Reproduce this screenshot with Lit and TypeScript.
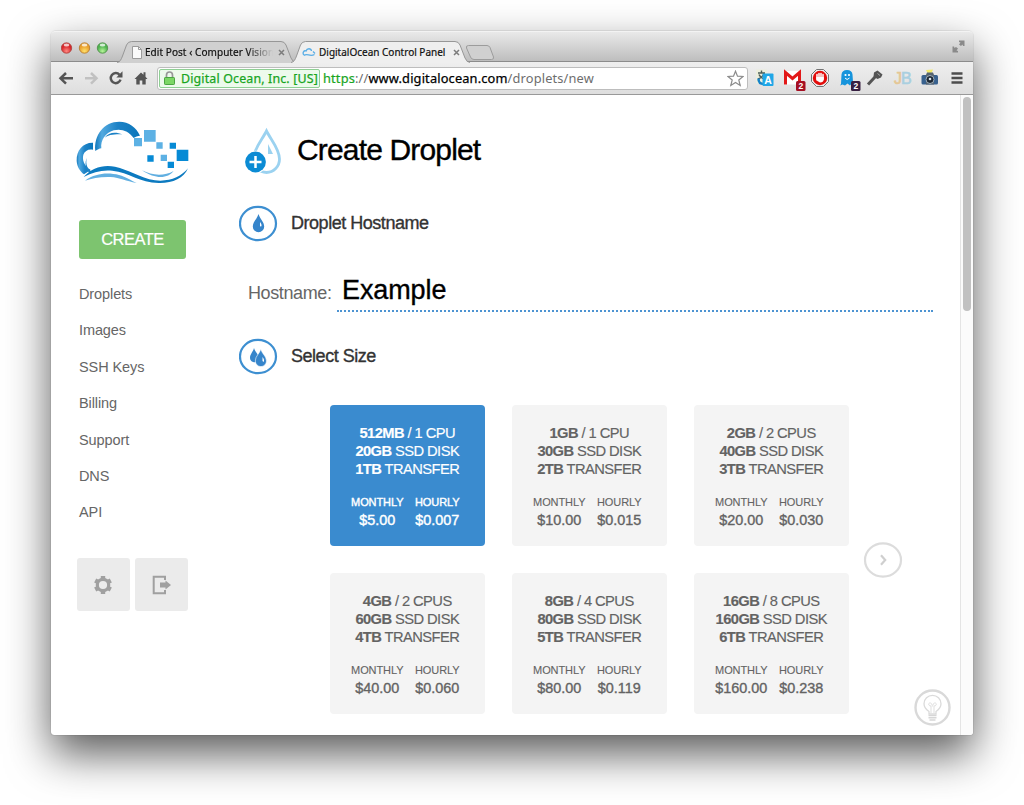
import { LitElement, html, css, svg } from "lit";
import { customElement } from "lit/decorators.js";
import { classMap } from "lit/directives/class-map.js";

interface Plan {
  memory: string;
  cpu: string;
  disk: string;
  transfer: string;
  monthly: string;
  hourly: string;
  active?: boolean;
}

const PLANS: Plan[] = [
  { memory: "512MB", cpu: "1 CPU", disk: "20GB", transfer: "1TB", monthly: "$5.00", hourly: "$0.007", active: true },
  { memory: "1GB", cpu: "1 CPU", disk: "30GB", transfer: "2TB", monthly: "$10.00", hourly: "$0.015" },
  { memory: "2GB", cpu: "2 CPUS", disk: "40GB", transfer: "3TB", monthly: "$20.00", hourly: "$0.030" },
  { memory: "4GB", cpu: "2 CPUS", disk: "60GB", transfer: "4TB", monthly: "$40.00", hourly: "$0.060" },
  { memory: "8GB", cpu: "4 CPUS", disk: "80GB", transfer: "5TB", monthly: "$80.00", hourly: "$0.119" },
  { memory: "16GB", cpu: "8 CPUS", disk: "160GB", transfer: "6TB", monthly: "$160.00", hourly: "$0.238" },
];

const NAV = ["Droplets", "Images", "SSH Keys", "Billing", "Support", "DNS", "API"];

const tabShape = (w: number, fill: string) => svg`
  <path d="M0 22 C3 21 4 19 5.500 15 L9.500 4 Q11 .5 14.500 .5 H${w - 15} Q${w - 11.500} .5 ${w - 10} 4 L${w - 5} 17 Q${w - 3} 22 ${w} 22 Z" fill=${fill}></path>
  <path d="M0 21.500 C3 21 4 19 5.500 15 L9.500 4 Q11 .5 14.500 .5 H${w - 15} Q${w - 11.500} .5 ${w - 10} 4 L${w - 5} 17 Q${w - 3} 21.500 ${w} 21.500" fill="none" stroke="#979797"></path>`;

@customElement("browser-chrome")
class BrowserChrome extends LitElement {
  static styles = css`
    :host { display: block; font-family: "Noto Sans", sans-serif; color: #111; }
    .strip { display: flex; height: 31px; padding-left: 10px; box-sizing: border-box; border-bottom: 1px solid #8c8c8c;
      border-top: 1px solid #f3f3f3; background: linear-gradient(#e9e9e9, #bebebe); border-radius: 4px 4px 0 0; }
    .lights { display: block; width: 48px; height: 14px; margin-top: 9px; }
    .tab { position: relative; height: 22px; margin-top: 9px; display: flex; align-items: center; font-size: 10px; white-space: nowrap; }
    .shape { position: absolute; left: 0; top: 0; height: 22px; }
    .first { width: 179px; margin-left: 8px; }
    .second { width: 179px; margin-left: -5px; z-index: 1; }
    .first .shape, .second .shape { width: 179px; }
    .favicon { position: relative; width: 12px; height: 13px; margin-left: 14px; flex: none; }
    .second .favicon { width: 14px; margin-left: 11px; }
    .label { position: relative; margin-left: 3px; width: 131px; flex: none; line-height: 16px; -webkit-text-stroke: .2px currentColor; }
    .first .label { margin-left: 2px; width: 138px; -webkit-mask-image: linear-gradient(90deg, #000 102px, transparent 128px); letter-spacing: .06px; }
    .close { position: relative; width: 7px; height: 7px; margin-left: -5px; flex: none; }
    .second .close { margin-left: 3px; }
    .plus { width: 30px; height: 15px; margin: 13px 0 0 -5px; }
    .full { width: 13px; height: 13px; margin: 8px 8px 0 auto; }
    .bar { display: flex; align-items: center; height: 33px; box-sizing: border-box; padding: 0 8px 0 7px;
      background: linear-gradient(#efefef, #dedede); border-bottom: 1px solid #999; }
    .nav { width: 91px; height: 16px; flex: none; }
    .omni { display: flex; align-items: center; width: 591px; height: 23px; margin-left: 8px; box-sizing: border-box; flex: none;
      border: 1px solid #bdbdbd; border-radius: 3px; background: #fff; font-size: 12.400px; white-space: nowrap; }
    .cert { display: flex; align-items: center; width: 161px; height: 19px; box-sizing: border-box; margin-left: 1px; padding-left: 4px;
      border: 1px solid #8fcf94; border-radius: 2px; background: #edfaec; color: #18a51e; letter-spacing: .16px; -webkit-text-stroke: .25px currentColor; }
    .lock { width: 11px; height: 14px; margin-right: 6px; flex: none; }
    .url { margin-left: 3px; font-size: 12.800px; letter-spacing: .16px; color: #6d6d6d; }
    .scheme { color: #18a51e; -webkit-text-stroke: .2px currentColor; }
    .host { color: #000; -webkit-text-stroke: .25px currentColor; }
    .star { width: 17px; height: 17px; margin: 0 3px 0 auto; }
    .ext { width: 212px; height: 28px; margin-left: 8px; flex: none; }
    .badge { font: bold 8.500px "Liberation Sans", sans-serif; fill: #fff; }
    .glyph { font: bold 10.500px "Liberation Sans", sans-serif; fill: #fff; }
    .jb { font: 16px "Liberation Sans", sans-serif; stroke-width: .6px; }
  `;

  render() {
    return html`
      <div class="strip">
        <svg class="lights" viewBox="0 0 48 14">
          <defs>
            <radialGradient id="r" cx=".5" cy=".8"><stop offset="0" stop-color="#ff8a83"/><stop offset="1" stop-color="#d8262a"/></radialGradient>
            <radialGradient id="y" cx=".5" cy=".8"><stop offset="0" stop-color="#ffe26c"/><stop offset="1" stop-color="#eaa02c"/></radialGradient>
            <radialGradient id="g" cx=".5" cy=".8"><stop offset="0" stop-color="#b9f59a"/><stop offset="1" stop-color="#4fb350"/></radialGradient>
          </defs>
          <circle cx="5.500" cy="7" r="5.200" fill="url(#r)" stroke="#a8423e" stroke-width=".8"/>
          <circle cx="23.500" cy="7" r="5.200" fill="url(#y)" stroke="#b0762d" stroke-width=".8"/>
          <circle cx="41.500" cy="7" r="5.200" fill="url(#g)" stroke="#4c8a45" stroke-width=".8"/>
          <ellipse cx="5.500" cy="4" rx="2.800" ry="1.500" fill="#fff" opacity=".75"/>
          <ellipse cx="23.500" cy="4" rx="2.800" ry="1.500" fill="#fff" opacity=".75"/>
          <ellipse cx="41.500" cy="4" rx="2.800" ry="1.500" fill="#fff" opacity=".75"/>
        </svg>
        <div class="tab first">
          <svg class="shape" viewBox="0 0 179 22">${tabShape(179, "#d0d0d0")}</svg>
          <svg class="favicon" viewBox="0 0 12 13"><path d="M1.500 .5H7.500L10.500 3.500V12.500H1.500Z" fill="#fafafa" stroke="#9b9b9b"/><path d="M7.500 .5V3.500H10.500" fill="none" stroke="#9b9b9b"/></svg>
          <span class="label">Edit Post ‹ Computer Vision</span>
          <svg class="close" viewBox="0 0 7 7"><path d="M1 1L6 6M6 1L1 6" stroke="#7c7c7c" stroke-width="1.500"/></svg>
        </div>
        <div class="tab second">
          <svg class="shape" viewBox="0 0 179 22">${tabShape(179, "#efefef")}</svg>
          <svg class="favicon" viewBox="0 0 14 13"><path d="M2 9C0 7 2 4 4 5C5 2 9 2 9.500 5M2 9.500C5 7 8 11 12.500 8.500M11 5.500L13 7.500" fill="none" stroke="#5aaee6" stroke-width="1.300"/></svg>
          <span class="label">DigitalOcean Control Panel</span>
          <svg class="close" viewBox="0 0 7 7"><path d="M1 1L6 6M6 1L1 6" stroke="#7c7c7c" stroke-width="1.500"/></svg>
        </div>
        <svg class="plus" viewBox="0 0 30 15"><path d="M3.500 .5H22Q24 .5 25 2.500L28.500 12Q29 14.500 26.500 14.500H9Q6.500 14.500 5.500 12L1.500 3Q.8 .5 3.500 .5Z" fill="#d0d0d0" stroke="#9c9c9c"/></svg>
        <svg class="full" viewBox="0 0 13 13"><path d="M7 .5H12.500V6H11L10.500 4.500L9 6L7 4.500L8.500 2.500L7 2ZM.5 6.500H2L2.500 8L4 7L6 8.500L4.500 10.500L6 11V12.500H.5Z" fill="#8a8a8a"/></svg>
      </div>
      <div class="bar">
        <svg class="nav" viewBox="0 0 91 16">
          <path d="M8 3L2.500 8.300L8 13.600M3 8.300H15" fill="none" stroke="#555" stroke-width="2.500"/>
          <path d="M33 3L38.500 8.300L33 13.600M38 8.300H27" fill="none" stroke="#c1c1c1" stroke-width="2.500"/>
          <path d="M61.500 4.800A5 5 0 1 0 62.500 9.700" fill="none" stroke="#555" stroke-width="2.500"/><path d="M64.500 1.200V7.400H58.300Z" fill="#555"/>
          <path d="M76.500 9L83 2.400L85.500 4.800V2.200H87.500V6.800L89.500 9H87.700V14.500H84.300V10.500H81.700V14.500H78.300V9Z" fill="#555"/>
        </svg>
        <div class="omni">
          <div class="cert">
            <svg class="lock" viewBox="0 0 11 14"><path d="M2.500 7V4A3 3 0 0 1 8.500 4V7" fill="none" stroke="#979797" stroke-width="1.700"/><rect x=".5" y="6.500" width="10" height="7" rx=".7" fill="#7bd765" stroke="#4ba542"/></svg>
            <span>Digital Ocean, Inc. [US]</span>
          </div>
          <span class="url"><span class="scheme">https</span>://<span class="host">www.digitalocean.com</span>/droplets/new</span>
          <svg class="star" viewBox="0 0 17 17"><path d="M8.500 1.200L10.500 6.200L16 6.500L11.800 10L13.200 15.500L8.500 12.500L3.800 15.500L5.200 10L1 6.500L6.500 6.200Z" fill="#fff" stroke="#8c8c8c" stroke-width="1.200"/></svg>
        </div>
        <svg class="ext" viewBox="0 0 212 28">
          <rect x="0" y="5.500" width="11" height="14" fill="#eceedd"/>
          <path d="M2 9H9M5.500 6.500V9M8 9.500C7 12.500 4 14.500 2 15M3 10.500C4 13 7 14.500 8.500 15" fill="none" stroke="#4b5c57" stroke-width="1.400"/>
          <path d="M2.500 14.500C2.500 18.500 4 20 8 20" fill="none" stroke="#1684ca" stroke-width="2.600"/>
          <rect x="6.500" y="9.500" width="11" height="12.500" rx="1" fill="#20a7e7"/><text class="glyph" x="8.300" y="19.600">A</text>
          <rect x="28" y="7" width="17" height="13.500" rx="1" fill="#fff"/><path d="M29.500 20.500V8.500L36.500 14.500L43.500 8.500V20.500" fill="none" stroke="#e21818" stroke-width="3"/>
          <rect x="40" y="17" width="9.500" height="10" rx="1.500" fill="#a50f23"/><text class="badge" x="42.400" y="25">2</text>
          <path d="M60.500 5.500H67.500L72.500 10.500V17.500L67.500 22.500H60.500L55.500 17.500V10.500Z" fill="#eee" stroke="#737373"/>
          <circle cx="64" cy="14" r="7.200" fill="#e20d0b"/><path d="M61 16V10.500M63 14V9.500M65 14V9.500M67 15V10.500" stroke="#fff" stroke-width="1.500" stroke-linecap="round"/><path d="M60.300 13H67.800V15.500Q67.500 18.500 64 18.500Q61 18 60.300 15Z" fill="#fff"/>
          <path d="M85 20L85.500 10.500Q86 6 91 6Q96 6 96.500 10.500L97 18L94 21.500L91.500 19.500L89 21.500L86.500 20.500L84 21.500Z" fill="#1694dc"/><circle cx="89.500" cy="11" r="1.100" fill="#fff"/><circle cx="93" cy="11" r="1.100" fill="#fff"/><path d="M89 14Q91 17 93.500 14" fill="none" stroke="#fff"/>
          <rect x="95" y="17" width="9.500" height="10" rx="1.500" fill="#382042"/><text class="badge" x="97.400" y="25">2</text>
          <path d="M112 20.500L119.500 12.500" stroke="#555" stroke-width="3"/><path d="M118 8.500L121.500 6.500L126.500 10.500L125 13.500L121.500 15L117.500 12.500Z" fill="#555"/><path d="M121.500 9.500L124 11.500" stroke="#aaa"/>
          <text class="jb" x="138" y="20" fill="#e5c795" stroke="#e5c795">J</text><text class="jb" x="145" y="20" fill="#a9cfe0" stroke="#a9cfe0">B</text>
          <path d="M170 6L177 5.500L175.500 9H171.500Z" fill="#f3ea6b"/><rect x="165.500" y="11" width="16.500" height="9.500" rx="1.500" fill="#38618e"/><path d="M170 11L171 8.500H177L178 11V20.500H170Z" fill="#55636f"/><circle cx="174" cy="15.500" r="4" fill="#1c2733" stroke="#9fb0bd"/><circle cx="174" cy="15" r="1.300" fill="#dce6ef"/>
          <path d="M195.500 9.500H206.500M195.500 14H206.500M195.500 18.500H206.500" stroke="#4d4d4d" stroke-width="2.400"/>
        </svg>
      </div>`;
  }
}

@customElement("plan-card")
class PlanCard extends LitElement {
  static properties = { plan: { attribute: false } };
  declare plan: Plan;
  static styles = css`
    :host { display: block; }
    .card { height: 141px; box-sizing: border-box; padding-top: 19px; border-radius: 4px; background: #f4f4f4; color: #636363; text-align: center; }
    .active { background: #3a8bcf; color: #fff; }
    .spec { font-size: 14.700px; line-height: 18px; letter-spacing: -.56px; white-space: nowrap; -webkit-text-stroke: .15px currentColor; }
    .prices { display: grid; grid-template-columns: 53px 45px; justify-content: center; column-gap: 11px; margin-top: 15.500px; padding-right: 4px; }
    .term { font-size: 11px; line-height: 17px; letter-spacing: -.08px; -webkit-text-stroke: .1px currentColor; }
    .price { font-size: 14.400px; line-height: 18px; -webkit-text-stroke: .35px currentColor; display: flex; justify-content: center; white-space: nowrap; }
    .active .price, .active .term { -webkit-text-stroke: .4px currentColor; }
  `;
  render() {
    const p = this.plan;
    return html`<div class=${classMap({ card: true, active: !!p.active })}>
      <div class="spec"><b>${p.memory}</b> / ${p.cpu}</div>
      <div class="spec"><b>${p.disk}</b> SSD DISK</div>
      <div class="spec"><b>${p.transfer}</b> TRANSFER</div>
      <div class="prices">
        <span class="term">MONTHLY</span><span class="term">HOURLY</span>
        <span class="price">${p.monthly}</span><span class="price">${p.hourly}</span>
      </div>
    </div>`;
  }
}

@customElement("app-root")
class AppRoot extends LitElement {
  static styles = css`
    :host { display: block; height: 805px; box-sizing: border-box; padding: 31px 51px 0; overflow: hidden; background: #fff;
      font-family: "Liberation Sans", Arial, sans-serif; }
    .window { height: 704px; border-radius: 5px 5px 3px 3px; background: #fff; display: flex; flex-direction: column;
      box-shadow: 0 0 1px 0 rgba(0,0,0,.6), 0 19px 44px rgba(0,0,0,.65); }
    .page { display: flex; flex: 1; min-height: 0; position: relative; }
    .side { width: 112px; padding: 25px 0 0 26px; flex: none; }
    .logo { display: block; width: 114px; height: 65px; margin-left: -1px; }
    .create { display: flex; align-items: center; justify-content: center; width: 107px; height: 39px; margin: 35px 0 0 2px; box-sizing: border-box;
      border-radius: 3px; background: #7dc46f; color: #fff; font-size: 16.500px; letter-spacing: -.5px; -webkit-text-stroke: .2px #fff; }
    .menu { display: flex; flex-direction: column; margin: 17px 0 0 2px; }
    .item { height: 36.400px; line-height: 36.400px; font-size: 14.500px; color: #666; letter-spacing: -.1px; }
    .tools { display: flex; gap: 5.500px; margin: 27.500px 0 0 -.5px; }
    .tool { width: 53px; height: 53px; border-radius: 3px; background: #ebebeb; display: flex; align-items: center; justify-content: center; flex: none; }
    .tool svg { width: 20px; height: 20px; }
    .main { flex: 1; padding: 29px 27px 0 50px; min-width: 0; height: 640px; box-sizing: border-box; overflow: hidden; }
    .title { display: flex; align-items: center; height: 54px; padding-left: 5px; }
    .drop { width: 38px; height: 50px; margin-top: -1px; }
    .heading { margin: -2px 0 0 15px; font-weight: 400; font-size: 30px; line-height: 40px; letter-spacing: -.84px; color: #000; -webkit-text-stroke: .35px #000; }
    .section { display: flex; align-items: center; height: 37px; gap: 13px; }
    .ring { width: 39px; height: 37px; }
    .sub { margin: 0; font-weight: 400; font-size: 18px; letter-spacing: -.47px; color: #333; -webkit-text-stroke: .35px #333; }
    .name { margin-top: 27px; }
    .field { display: flex; align-items: center; height: 43px; margin: 27px 0 26px; padding-left: 9px; }
    .caption { width: 89px; font-size: 18px; letter-spacing: -.38px; color: #666; line-height: 24px; margin-top: 4px; }
    .value { flex: 1; height: 43px; line-height: 43px; box-sizing: border-box; padding-left: 5px; font-size: 27px; color: #000;
      border-bottom: 2px dotted #4d94d2; letter-spacing: -.1px; -webkit-text-stroke: .35px #000; }
    .picker { display: flex; align-items: center; gap: 14px; margin: 30px 0 0 90.500px; }
    .plans { display: grid; grid-template-columns: repeat(3, 155.500px); column-gap: 26.500px; row-gap: 27px; }
    .next { width: 40px; height: 37px; }
    .rail { width: 13px; box-sizing: border-box; border-left: 1px solid #e4e4e4; background: #fbfbfb; padding: 2px 2px; border-radius: 0 0 3px 0; flex: none; }
    .thumb { width: 8px; height: 214px; border-radius: 4px; background: #c1c1c1; }
    .hint { position: absolute; right: 22px; bottom: 9px; width: 37px; height: 37px; }
  `;

  render() {
    return html`<div class="window">
      <browser-chrome></browser-chrome>
      <div class="page">
        <div class="side">
          <svg class="logo" viewBox="48 45 342 195">
            <defs><linearGradient id="c" x1="0" x2="1"><stop offset="0" stop-color="#1379bd"/><stop offset=".15" stop-color="#52a9df"/><stop offset=".5" stop-color="#1d82c6"/><stop offset="1" stop-color="#0a76bb"/></linearGradient></defs>
            <path d="M106 138C101 90 132 50 178 50C207 50 229 67 240 92C233 93 226 95 221 99C206 78 184 70 161 76C136 83 121 107 124 130C118 131 112 134 106 138Z" fill="url(#c)"/>
            <path d="M134 98C145 82 166 79 187 88C164 88 148 88 134 98Z" fill="#1c82c6"/>
            <path d="M99 113C69 112 49 136 50 167C51 185 60 199 72 208L92 195C72 183 66 164 70 149C74 137 86 131 99 134Z" fill="url(#c)"/>
            <path d="M80 159C76 179 83 194 96 200L88 203C76 193 74 174 80 159Z" fill="#1c82c6"/>
            <path d="M71 216C95 188 130 178 165 185C205 193 238 218 285 226C328 231 363 216 384 190C371 221 337 235 296 234C239 233 207 202 157 197C126 194 99 201 71 216Z" fill="#0c7ac0"/>
            <path d="M75 227C108 203 145 202 177 210C199 216 212 226 230 234C197 228 181 218 151 216C120 215 97 220 75 227Z" fill="#61afe1"/>
            <path d="M246 196C276 212 312 214 341 198C325 219 290 226 246 196Z" fill="#61afe1"/>
            <path d="M222 99H246V124H222ZM252 75H287V110H252ZM289 112H308V131H289ZM302 149H321V168H302Z" fill="#5db1e4"/>
            <path d="M329 113H348V131H329ZM350 134H385V168H350ZM262 151H281V170H262ZM323 170H342V189H323Z" fill="#068ad5"/>
          </svg>
          <div class="create">CREATE</div>
          <nav class="menu">${NAV.map((n) => html`<span class="item">${n}</span>`)}</nav>
          <div class="tools">
            <div class="tool"><svg viewBox="0 0 20 20"><circle cx="10" cy="10" r="5.700" fill="none" stroke="#a0a0a0" stroke-width="3.200"/><path d="M10 1V4M10 16V19M2.200 5.500L5 7M15 13L17.800 14.500M2.200 14.500L5 13M15 7L17.800 5.500" stroke="#a0a0a0" stroke-width="4.400"/></svg></div>
            <div class="tool"><svg viewBox="0 0 20 20"><path d="M13 5V1.700H1.700V18.300H13V15" fill="none" stroke="#a0a0a0" stroke-width="2"/><path d="M8 7.500H13.500V5.500L19 10L13.500 14.500V12.500H8Z" fill="#a0a0a0"/></svg></div>
          </div>
        </div>
        <div class="main">
          <div class="title">
            <svg class="drop" viewBox="0 0 38 50">
              <path d="M22.500 5C18 14 9.500 23 9.500 33A13 13.500 0 0 0 35.500 33C35.500 23 27 14 22.500 5Z" fill="#fff" stroke="#9bd2f0" stroke-width="2.800"/>
              <path d="M24 18L29 28H24Z" fill="#9bd2f0"/>
              <circle cx="11.500" cy="36" r="11.300" fill="#fff"/><circle cx="11.500" cy="36" r="10.400" fill="#0b8bd4"/>
              <path d="M11.500 30V42M5.500 36H17.500" stroke="#fff" stroke-width="2.500"/>
            </svg>
            <h1 class="heading">Create Droplet</h1>
          </div>
          <div class="section name">
            <svg class="ring" viewBox="0 0 39 37"><ellipse cx="19" cy="18.500" rx="18" ry="16.700" fill="none" stroke="#3d8fd1" stroke-width="2.200"/><path d="M19.500 9C18 14 13.800 17 13.800 21.500A5.700 5.700 0 0 0 25.200 21.500C25.200 17 21 14 19.500 9Z" fill="#3685cb"/><path d="M21 17V21L22 21.800Q23.500 20 21 17Z" fill="#fff"/></svg>
            <h2 class="sub">Droplet Hostname</h2>
          </div>
          <div class="field"><span class="caption">Hostname:</span><span class="value">Example</span></div>
          <div class="section">
            <svg class="ring" viewBox="0 0 39 37"><ellipse cx="19" cy="18.500" rx="18" ry="16.700" fill="none" stroke="#3d8fd1" stroke-width="2.200"/><path d="M15 10C14 14 11 16 11 20A4.500 4.500 0 0 0 19 22.500V17C17 14 16 13 15 10Z" fill="#3685cb"/><path d="M21.800 11C20.500 16 16.300 18 16.300 23A5.600 5.600 0 0 0 27.500 23C27.500 18 23 16 21.800 11Z" fill="#3685cb" stroke="#fff" stroke-width=".6"/><path d="M23.500 19V23L24.500 24Q26 22 23.500 19Z" fill="#fff"/></svg>
            <h2 class="sub">Select Size</h2>
          </div>
          <div class="picker">
            <div class="plans">${PLANS.map((p) => html`<plan-card .plan=${p}></plan-card>`)}</div>
            <svg class="next" viewBox="0 0 40 37"><ellipse cx="20" cy="19" rx="18" ry="16.700" fill="none" stroke="#dcdcdc" stroke-width="2.200"/><path d="M18 14.300L22.200 19L18 23.700" fill="none" stroke="#cfcfcf" stroke-width="2.200"/></svg>
          </div>
        </div>
        <div class="rail"><div class="thumb"></div></div>
        <svg class="hint" viewBox="0 0 37 37"><circle cx="18.500" cy="18.500" r="17" fill="#fff" stroke="#d9d9d9" stroke-width="2.400"/><path d="M15 25V22.500C12 20.500 10 18 10 14.800A8.500 8.500 0 0 1 27 14.800C27 18 25 20.500 22 22.500V25Z" fill="none" stroke="#dadada" stroke-width="1.300"/><path d="M17 24V17C14 17 14 13.500 16.500 14C18.500 14.500 17.500 17 18.500 17C19.500 17 18.500 14.500 20.500 14C23 13.500 23 17 20 17V24" fill="none" stroke="#dfdfdf"/><path d="M14.500 26.500H22.500M14.500 28.800H22.500M15.500 31H21.500" stroke="#d6d6d6" stroke-width="1.500"/></svg>
      </div>
    </div>`;
  }
}
